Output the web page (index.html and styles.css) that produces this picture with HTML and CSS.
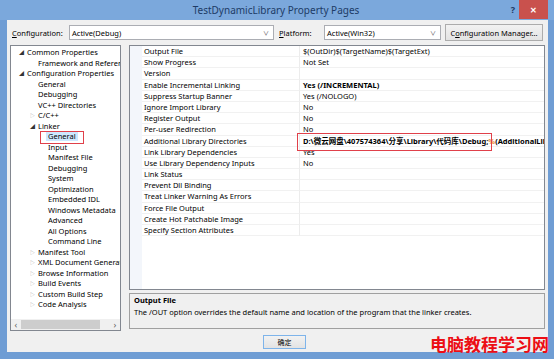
FILE: index.html
```html
<!DOCTYPE html>
<html lang="en">
<head>
    <meta charset="UTF-8">
    <title>TestDynamicLibrary Property Pages</title>
    <link rel="stylesheet" href="styles.css">
</head>
<body>
    <div class="window">
        <div class="titlebar">
            <span class="title">TestDynamicLibrary Property Pages</span>
            <span class="help">?</span>
            <span class="close">&#x2715;</span>
        </div>

        <div class="client">
            <!-- Configuration row -->
            <div class="config-row">
                <span class="label"><u>C</u>onfiguration:</span>
                <div class="combo combo-config"><span>Active(Debug)</span><span class="arrow">&#x2228;</span></div>
                <span class="label label-platform"><u>P</u>latform:</span>
                <div class="combo combo-platform"><span>Active(Win32)</span><span class="arrow">&#x2228;</span></div>
                <div class="button btn-manager">C<u>o</u>nfiguration Manager...</div>
            </div>

            <div class="main">
                <!-- Tree -->
                <div class="tree">
                    <div class="tree-list">
                        <div class="node lvl0"><span class="exp">&#x25E2;</span>Common Properties</div>
                        <div class="node lvl1">Framework and References</div>
                        <div class="node lvl0"><span class="exp">&#x25E2;</span>Configuration Properties</div>
                        <div class="node lvl1">General</div>
                        <div class="node lvl1">Debugging</div>
                        <div class="node lvl1">VC++ Directories</div>
                        <div class="node lvl1"><span class="col">&#x25B7;</span>C/C++</div>
                        <div class="node lvl1"><span class="exp">&#x25E2;</span>Linker</div>
                        <div class="node lvl2"><span class="selected">General</span></div>
                        <div class="node lvl2">Input</div>
                        <div class="node lvl2">Manifest File</div>
                        <div class="node lvl2">Debugging</div>
                        <div class="node lvl2">System</div>
                        <div class="node lvl2">Optimization</div>
                        <div class="node lvl2">Embedded IDL</div>
                        <div class="node lvl2">Windows Metadata</div>
                        <div class="node lvl2">Advanced</div>
                        <div class="node lvl2">All Options</div>
                        <div class="node lvl2">Command Line</div>
                        <div class="node lvl1"><span class="col">&#x25B7;</span>Manifest Tool</div>
                        <div class="node lvl1"><span class="col">&#x25B7;</span>XML Document Generator</div>
                        <div class="node lvl1"><span class="col">&#x25B7;</span>Browse Information</div>
                        <div class="node lvl1"><span class="col">&#x25B7;</span>Build Events</div>
                        <div class="node lvl1"><span class="col">&#x25B7;</span>Custom Build Step</div>
                        <div class="node lvl1"><span class="col">&#x25B7;</span>Code Analysis</div>
                    </div>
                    <div class="hscroll">
                        <span class="sarrow">&#x2039;</span>
                        <span class="thumb"></span>
                        <span class="sarrow">&#x203A;</span>
                    </div>
                    <div class="mark mark-tree"></div>
                </div>

                <div class="right">
                    <!-- Property grid -->
                    <div class="grid">
                        <div class="row"><span class="name">Output File</span><span class="value">$(OutDir)$(TargetName)$(TargetExt)</span></div>
                        <div class="row"><span class="name">Show Progress</span><span class="value">Not Set</span></div>
                        <div class="row"><span class="name">Version</span><span class="value"></span></div>
                        <div class="row"><span class="name">Enable Incremental Linking</span><span class="value bold">Yes (/INCREMENTAL)</span></div>
                        <div class="row"><span class="name">Suppress Startup Banner</span><span class="value">Yes (/NOLOGO)</span></div>
                        <div class="row"><span class="name">Ignore Import Library</span><span class="value">No</span></div>
                        <div class="row"><span class="name">Register Output</span><span class="value">No</span></div>
                        <div class="row"><span class="name">Per-user Redirection</span><span class="value">No</span></div>
                        <div class="row"><span class="name">Additional Library Directories</span><span class="value bold">D:\微云网盘\407574364\分享\Library\代码库\Debug;<span class="caret">%</span>(AdditionalLibraryDirectories)</span></div>
                        <div class="row"><span class="name">Link Library Dependencies</span><span class="value">Yes</span></div>
                        <div class="row"><span class="name">Use Library Dependency Inputs</span><span class="value">No</span></div>
                        <div class="row"><span class="name">Link Status</span><span class="value"></span></div>
                        <div class="row"><span class="name">Prevent Dll Binding</span><span class="value"></span></div>
                        <div class="row"><span class="name">Treat Linker Warning As Errors</span><span class="value"></span></div>
                        <div class="row"><span class="name">Force File Output</span><span class="value"></span></div>
                        <div class="row"><span class="name">Create Hot Patchable Image</span><span class="value"></span></div>
                        <div class="row"><span class="name">Specify Section Attributes</span><span class="value"></span></div>
                        <div class="grid-fill"><span class="gutter"></span></div>
                        <div class="mark mark-grid"></div>
                    </div>

                    <!-- Description -->
                    <div class="desc">
                        <div class="desc-title">Output File</div>
                        <div class="desc-text">The /OUT option overrides the default name and location of the program that the linker creates.</div>
                    </div>
                </div>
            </div>

            <div class="buttons">
                <div class="button btn-ok">确定</div>
            </div>
        </div>

        <div class="watermark">电脑教程学习网</div>
    </div>
</body>
</html>
```

FILE: styles.css
```css
body {
    margin: 0;
    font-family: "Noto Sans", "Noto Sans CJK SC", sans-serif;
    font-size: 7.5px;
    color: #000;
}

.window {
    position: relative;
    width: 554px;
    height: 359px;
    background-color: #6f9dd4;
    display: flex;
    flex-direction: column;
    overflow: hidden;
}

.titlebar {
    position: relative;
    height: 20px;
    display: flex;
    align-items: center;
    justify-content: center;
    background-color: #7ba8dc;
}

.title {
    font-size: 10px;
    color: #1d3b66;
    margin-left: -2px;
}

.help {
    position: absolute;
    right: 39px;
    top: 3px;
    font-size: 9px;
    font-weight: bold;
    color: #1d3b66;
}

.close {
    position: absolute;
    right: 6px;
    top: 0;
    width: 29px;
    height: 19px;
    background-color: #c9514d;
    color: #fff;
    font-size: 8px;
    font-weight: bold;
    display: flex;
    align-items: center;
    justify-content: center;
}

.client {
    flex: 1;
    margin: 0 6px 7px 7px;
    padding: 4px 3px 0 3px;
    background-color: #f0f0f0;
    display: flex;
    flex-direction: column;
}

/* Configuration row */
.config-row {
    height: 17px;
    display: flex;
    align-items: center;
}

.label {
    width: 57px;
    padding-left: 2px;
}

.label-platform {
    width: 45px;
    padding-left: 5px;
}

.combo {
    height: 15px;
    box-sizing: border-box;
    background-color: #fff;
    border: 1px solid #abadb3;
    display: flex;
    align-items: center;
    justify-content: space-between;
    padding: 0 4px 0 2px;
}

.combo-config {
    width: 205px;
}

.combo-platform {
    width: 117px;
}

.arrow {
    font-size: 6px;
    color: #555;
}

.button {
    box-sizing: border-box;
    border: 1px solid #acacac;
    background: linear-gradient(#f2f2f2, #e3e3e3);
    display: flex;
    align-items: center;
    justify-content: center;
}

.btn-manager {
    width: 98px;
    height: 17px;
    margin-left: 4px;
}

/* Main area */
.main {
    margin-top: 4px;
    display: flex;
    gap: 8px;
}

.tree {
    position: relative;
    width: 111px;
    flex-shrink: 0;
    height: 286px;
    box-sizing: border-box;
    background-color: #fff;
    border: 1px solid #828790;
    display: flex;
    flex-direction: column;
    overflow: hidden;
}

.tree-list {
    flex: 1;
    padding-top: 1px;
    white-space: nowrap;
}

.node {
    height: 10.5px;
    line-height: 10.5px;
    position: relative;
}

.lvl0 {
    padding-left: 16px;
}

.lvl1 {
    padding-left: 27px;
}

.lvl2 {
    padding-left: 37px;
}

.exp,
.col {
    position: absolute;
    font-size: 5px;
    margin-left: -8px;
}

.exp {
    color: #333;
}

.col {
    color: #a0a0a0;
}

.selected {
    background-color: #cde8ff;
    padding: 0 2px;
    margin-left: -2px;
}

.hscroll {
    height: 11px;
    display: flex;
    align-items: center;
    background-color: #f0f0f0;
    color: #606060;
    font-size: 9px;
}

.sarrow {
    width: 10px;
    text-align: center;
}

.thumb {
    width: 79px;
    height: 9px;
    background-color: #cdcdcd;
    margin-right: auto;
}

.mark {
    position: absolute;
    border: 1px solid #e0404a;
}

.mark-tree {
    left: 29px;
    top: 85px;
    width: 42px;
    height: 11px;
}

.right {
    flex: 1;
    min-width: 0;
    display: flex;
    flex-direction: column;
    gap: 3px;
}

/* Property grid */
.grid {
    position: relative;
    height: 245px;
    box-sizing: border-box;
    background-color: #fff;
    border: 1px solid #828790;
    display: flex;
    flex-direction: column;
    overflow: hidden;
}

.row {
    height: 11.2px;
    line-height: 11px;
    display: flex;
    white-space: nowrap;
}

.row::before,
.gutter {
    content: "";
    width: 12px;
    flex-shrink: 0;
    background-color: #f3f6fb;
}

.name {
    width: 158px;
    flex-shrink: 0;
    padding-left: 2px;
    border-bottom: 1px solid #f1f1f1;
    border-right: 1px solid #ececec;
    box-sizing: border-box;
}

.value {
    flex: 1;
    min-width: 0;
    padding-left: 3px;
    border-bottom: 1px solid #f1f1f1;
    overflow: hidden;
}

.bold {
    font-weight: bold;
}

.caret {
    color: #e8873c;
}

.grid-fill {
    flex: 1;
    display: flex;
}

.mark-grid {
    left: 167px;
    top: 87px;
    width: 193px;
    height: 16px;
}

/* Description */
.desc {
    height: 36px;
    box-sizing: border-box;
    border: 1px solid #a0a0a0;
    padding: 1px 4px;
}

.desc-title {
    font-weight: bold;
    line-height: 11px;
}

.desc-text {
    line-height: 12px;
}

.buttons {
    margin-top: 4px;
    display: flex;
}

.btn-ok {
    width: 43px;
    height: 14px;
    margin-left: 253px;
    font-family: "Noto Sans CJK SC", sans-serif;
    font-size: 7px;
    border-color: #7eb4ea;
}

.watermark {
    position: absolute;
    right: 5px;
    bottom: 6px;
    font-family: "Noto Sans CJK SC", sans-serif;
    font-size: 17px;
    font-weight: bold;
    line-height: 19px;
    color: #ec0d14;
}
```
